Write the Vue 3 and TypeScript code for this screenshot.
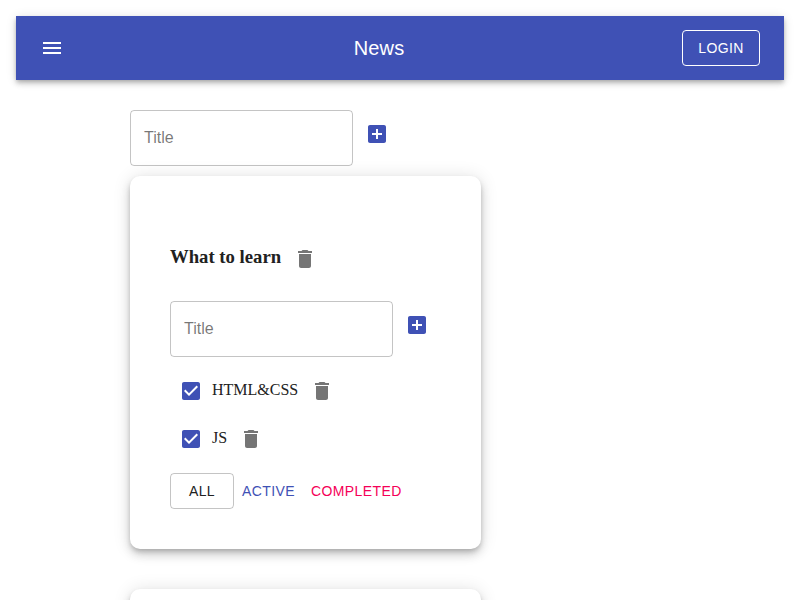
<script setup lang="ts">
import { ref } from 'vue'

interface Task { id: number; title: string; done: boolean }

const tasks = ref<Task[]>([
  { id: 1, title: 'HTML&CSS', done: true },
  { id: 2, title: 'JS', done: true },
])
const icons = {
  menu: 'M3 18h18v-2H3v2zm0-5h18v-2H3v2zm0-7v2h18V6H3z',
  add: 'M19 3H5c-1.11 0-2 .9-2 2v14c0 1.1.89 2 2 2h14c1.1 0 2-.9 2-2V5c0-1.1-.9-2-2-2zm-2 10h-4v4h-2v-4H7v-2h4V7h2v4h4v2z',
  trash: 'M6 19c0 1.1.9 2 2 2h8c1.1 0 2-.9 2-2V7H6v12zM19 4h-3.5l-1-1h-5l-1 1H5v2h14V4z',
  check: 'M19 3H5c-1.11 0-2 .9-2 2v14c0 1.1.89 2 2 2h14c1.11 0 2-.9 2-2V5c0-1.1-.89-2-2-2zm-9 14l-5-5 1.41-1.41L10 14.17l7.59-7.59L19 8l-9 9z',
}
</script>

<template>
  <div class="page">
    <header class="bar">
      <button class="icon-btn menu"><svg viewBox="0 0 24 24"><path :d="icons.menu" /></svg></button>
      <h6 class="heading">News</h6>
      <button class="btn login">Login</button>
    </header>
    <main class="content">
      <div class="add-row">
        <div class="field"><span>Title</span></div>
        <button class="icon-btn add"><svg viewBox="0 0 24 24"><path :d="icons.add" /></svg></button>
      </div>
      <section class="card">
        <h3 class="list-title">What to learn
          <button class="icon-btn remove-list"><svg viewBox="0 0 24 24"><path :d="icons.trash" /></svg></button>
        </h3>
        <div class="add-row">
          <div class="field"><span>Title</span></div>
          <button class="icon-btn add"><svg viewBox="0 0 24 24"><path :d="icons.add" /></svg></button>
        </div>
        <div class="tasks">
          <div v-for="t in tasks" :key="t.id" class="task">
            <button class="icon-btn check"><svg viewBox="0 0 24 24"><path :d="icons.check" /></svg></button>
            <span class="task-title">{{ t.title }}</span>
            <button class="icon-btn"><svg viewBox="0 0 24 24"><path :d="icons.trash" /></svg></button>
          </div>
        </div>
        <div class="filters">
          <button class="btn all">All</button>
          <button class="btn active">Active</button>
          <button class="btn completed">Completed</button>
        </div>
      </section>
      <section class="card next"></section>
    </main>
  </div>
</template>

<style>
body { margin: 0; overflow: hidden; }
</style>

<style scoped>
.page {
  box-sizing: border-box;
  height: 600px;
  overflow: hidden;
  padding: 16px;
  font-family: "Liberation Serif", serif;
  font-size: 16px;
  color: #212121;
}
button { margin: 0; border: 0; background: none; }
.bar {
  display: flex;
  align-items: center;
  justify-content: space-between;
  box-sizing: border-box;
  height: 64px;
  padding: 0 24px;
  background: #3f51b5;
  color: #fff;
  box-shadow: 0 2px 4px -1px rgba(0,0,0,.2), 0 4px 5px 0 rgba(0,0,0,.14), 0 1px 10px 0 rgba(0,0,0,.12);
}
.icon-btn {
  display: flex;
  flex: none;
  padding: 12px;
  color: rgba(0,0,0,.54);
}
.icon-btn svg { display: block; width: 24px; height: 24px; fill: currentColor; }
.icon-btn.menu { color: #fff; margin-left: -12px; }
.icon-btn.add, .icon-btn.check { color: #3f51b5; }
.icon-btn.check { padding: 9px; }
.icon-btn.remove-list { margin-top: 4px; }
.heading {
  margin: 0;
  font: 400 20px/32px "Liberation Sans", sans-serif;
  letter-spacing: .15px;
}
.btn {
  box-sizing: border-box;
  height: 36px;
  border-radius: 4px;
  padding: 0 8px;
  font: 400 14px/24px "Liberation Sans", sans-serif;
  letter-spacing: .4px;
  text-transform: uppercase;
}
.login { width: 78px; border: 1px solid #fff; color: #fff; }
.content { padding: 30px 0 0 114px; }
.add-row { display: flex; align-items: flex-start; }
.field {
  display: flex;
  align-items: center;
  box-sizing: border-box;
  width: 223px;
  height: 56px;
  padding: 0 13px 2px;
  border: 1px solid rgba(0,0,0,.23);
  border-radius: 4px;
  font: 16px/19px "Liberation Sans", sans-serif;
  color: rgba(0,0,0,.54);
}
.card {
  box-sizing: border-box;
  width: 351px;
  height: 373px;
  margin-top: 10px;
  padding: 57px 40px 40px;
  border-radius: 10px;
  background: #fff;
  box-shadow: 0 3px 5px -1px rgba(0,0,0,.2), 0 6px 10px 0 rgba(0,0,0,.14), 0 1px 18px 0 rgba(0,0,0,.12);
}
.card.next { margin-top: 40px; }
.list-title {
  display: flex;
  align-items: center;
  height: 48px;
  margin: 0 0 20px;
  font-size: 18.72px;
}
.tasks { padding-top: 10px; }
.task { display: flex; align-items: center; height: 48px; }
.task-title { padding-bottom: 2px; }
.filters { display: flex; margin-top: 10px; }
.all { width: 64px; border: 1px solid rgba(0,0,0,.23); color: #212121; }
.active { color: #3f51b5; }
.completed { color: #f50057; }
</style>
